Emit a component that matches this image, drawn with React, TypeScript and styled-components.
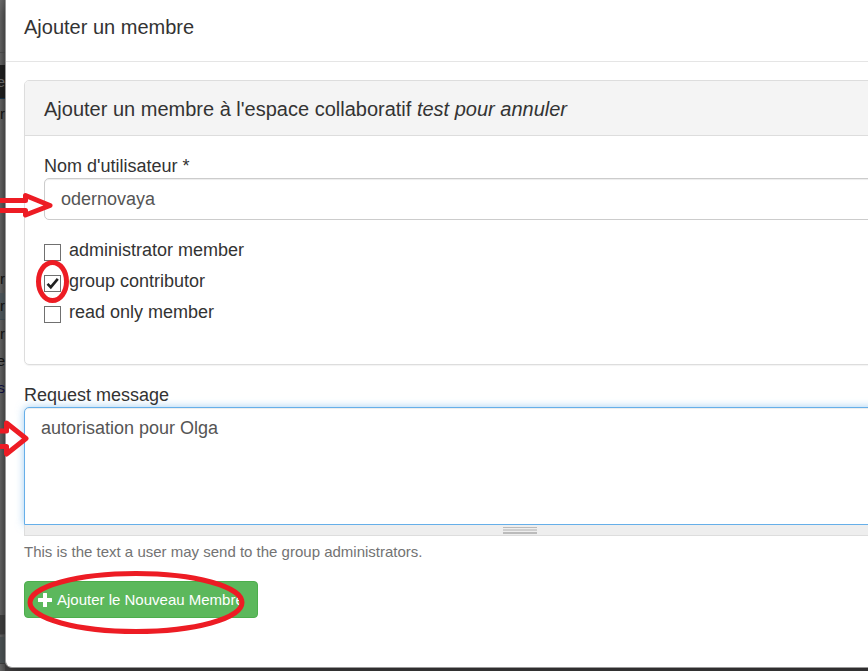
import React from "react";
import styled, { createGlobalStyle } from "styled-components";

const GlobalStyle = createGlobalStyle`
  *, *::before, *::after { box-sizing: border-box; }
  body {
    margin: 0;
    background: #4a4849;
    color: #333;
    font-family: "Liberation Sans", Arial, sans-serif;
    font-size: 18px;
    line-height: 24px;
  }
`;

const Screen = styled.div`
  position: relative;
  display: flex;
  min-height: 100vh;
  overflow: hidden;
`;

const Backdrop = styled.div`
  display: flex;
  flex-direction: column;
  flex: 0 0 5px;
  overflow: hidden;
  background: linear-gradient(to right, #6c6c6c, #5a5a5a);
`;

const BackdropRow = styled.div<{
  $height: number;
  $fill?: string;
  $edge?: string;
  $ink?: string;
}>`
  display: flex;
  justify-content: flex-end;
  align-items: center;
  flex: none;
  height: ${(p) => p.$height}px;
  background: ${(p) => p.$fill ?? "transparent"};
  border-bottom: 1px solid ${(p) => p.$edge ?? "transparent"};
  color: ${(p) => p.$ink ?? "#151515"};
  font-size: 15px;
`;

const Modal = styled.div`
  flex: none;
  align-self: flex-start;
  width: calc(100% + 162px);
  background: #fff;
  border: 1px solid #999;
  border-top: 0;
  border-radius: 0 0 7px 7px;
  box-shadow: 0 5px 15px rgba(0, 0, 0, 0.5);
`;

const ModalHeader = styled.header`
  padding: 14px 18px 20px;
  border-bottom: 1px solid #e5e5e5;
`;

const ModalTitle = styled.h1`
  margin: 0;
  font-size: 20px;
  line-height: 27px;
  font-weight: 400;
`;

const ModalBody = styled.form`
  padding: 18px 18px 49px;
`;

const Panel = styled.section`
  margin-bottom: 18px;
  border: 1px solid #ddd;
  border-radius: 5px;
  box-shadow: 0 1px 1px rgba(0, 0, 0, 0.05);
`;

const PanelHeading = styled.header`
  padding: 15px 19px 13px;
  background: #f4f4f4;
  border-bottom: 1px solid #ddd;
  border-radius: 4px 4px 0 0;
`;

const PanelTitle = styled.h2`
  margin: 0;
  font-size: 20px;
  line-height: 26px;
  font-weight: 400;
`;

const PanelBody = styled.div`
  padding: 18px 19px 40px;
`;

const FieldLabel = styled.label`
  display: block;
`;

const TextInput = styled.input`
  display: block;
  width: 100%;
  height: 42px;
  padding: 0 16px;
  border: 1px solid #ccc;
  border-radius: 5px;
  box-shadow: inset 0 1px 1px rgba(0, 0, 0, 0.075);
  color: #555;
  font: inherit;
  outline: 0;
`;

const CheckList = styled.div`
  display: grid;
  grid-auto-rows: 24px;
  row-gap: 7px;
  margin-top: 18px;
`;

const CheckLabel = styled.label`
  display: flex;
  align-items: center;
  gap: 8px;
`;

const CheckBoxFrame = styled.span`
  display: grid;
  width: 17px;
  height: 17px;
  margin-top: 4px;

  > * {
    grid-area: 1 / 1;
  }

  svg {
    visibility: hidden;
    pointer-events: none;
  }

  input:checked + svg {
    visibility: visible;
  }
`;

const CheckBox = styled.input`
  appearance: none;
  width: 17px;
  height: 17px;
  margin: 0;
  border: 1px solid #707070;
  background: #fff;
`;

const MessageArea = styled.textarea`
  display: block;
  width: 100%;
  height: 118px;
  padding: 8px 16px;
  border: 1px solid #66afe9;
  border-radius: 5px 5px 0 0;
  box-shadow: inset 0 1px 1px rgba(0, 0, 0, 0.075), 0 0 8px rgba(102, 175, 233, 0.6);
  color: #555;
  font: inherit;
  resize: none;
  outline: 0;
`;

const Grippie = styled.div`
  position: relative;
  display: flex;
  justify-content: center;
  align-items: center;
  height: 11px;
  background: #eee;
  border: 1px solid #ddd;
  border-top: 0;
`;

const HelpText = styled.p`
  margin: 4px 0 17px;
  color: #737373;
  font-size: 15px;
`;

const SubmitButton = styled.button`
  display: flex;
  align-items: center;
  gap: 5px;
  height: 37px;
  padding: 0 13px;
  border: 1px solid #4cae4c;
  border-radius: 4px;
  background: #5cb85c;
  color: #fff;
  font: inherit;
  font-size: 15px;
`;

const Annotations = styled.svg`
  position: absolute;
  top: 0;
  left: 0;
  pointer-events: none;
`;

const roles = [
  { id: "administrator", label: "administrator member", checked: false },
  { id: "contributor", label: "group contributor", checked: true },
  { id: "reader", label: "read only member", checked: false },
];

export default function App() {
  return (
    <>
      <GlobalStyle />
      <Screen>
        <Backdrop aria-hidden="true">
          <BackdropRow $height={53} $edge="#555" />
          <BackdropRow $height={12} />
          <BackdropRow $height={34} $fill="#222" $edge="#173a55" $ink="#777">e</BackdropRow>
          <BackdropRow $height={30}>r</BackdropRow>
          <BackdropRow $height={137} />
          <BackdropRow $height={27}>r</BackdropRow>
          <BackdropRow $height={27} $fill="#566066" $edge="#48555e">r</BackdropRow>
          <BackdropRow $height={28}>r</BackdropRow>
          <BackdropRow $height={27}>e</BackdropRow>
          <BackdropRow $height={27} $ink="#10104a">s</BackdropRow>
          <BackdropRow $height={213} />
          <BackdropRow $height={20} $fill="#444" $edge="#555" />
          <BackdropRow $height={2} />
          <BackdropRow $height={27} $fill="#535a5c" $edge="#444" />
        </Backdrop>

        <Modal role="dialog" aria-labelledby="dialog-title">
          <ModalHeader>
            <ModalTitle id="dialog-title">Ajouter un membre</ModalTitle>
          </ModalHeader>
          <ModalBody onSubmit={(event) => event.preventDefault()}>
            <Panel>
              <PanelHeading>
                <PanelTitle>
                  Ajouter un membre à l'espace collaboratif <em>test pour annuler</em>
                </PanelTitle>
              </PanelHeading>
              <PanelBody>
                <FieldLabel htmlFor="username">Nom d'utilisateur *</FieldLabel>
                <TextInput id="username" type="text" defaultValue="odernovaya" required />
                <CheckList>
                  {roles.map((role) => (
                    <CheckLabel key={role.id} htmlFor={role.id}>
                      <CheckBoxFrame>
                        <CheckBox id={role.id} type="checkbox" defaultChecked={role.checked} />
                        <svg width="17" height="17" viewBox="0 0 17 17">
                          <path d="M3.5 8.8 6.8 12.2 13.8 3.8" fill="none" stroke="#212121" strokeWidth="2.6" />
                        </svg>
                      </CheckBoxFrame>
                      {role.label}
                    </CheckLabel>
                  ))}
                </CheckList>
              </PanelBody>
            </Panel>

            <FieldLabel htmlFor="message">Request message</FieldLabel>
            <MessageArea id="message" defaultValue="autorisation pour Olga" />
            <Grippie>
              <svg width="34" height="7" viewBox="0 0 34 7" shapeRendering="crispEdges">
                <path d="M0 .5h34M0 5.5h34M0 6.5h34" stroke="#bbb" />
                <path d="M0 2.5h34M0 3.5h34" stroke="#cfcfcf" />
              </svg>
            </Grippie>
            <HelpText>This is the text a user may send to the group administrators.</HelpText>
            <SubmitButton type="submit">
              <svg width="14" height="14" viewBox="0 0 14 14" aria-hidden="true">
                <path
                  d="M5.5 0h3q.5 0 .5.5V5h4.5q.5 0 .5.5v3q0 .5-.5.5H9v4.5q0 .5-.5.5h-3q-.5 0-.5-.5V9H.5Q0 9 0 8.500v-3Q0 5 .5 5H5V.5Q5 0 5.500 0z"
                  fill="#fff"
                />
              </svg>
              Ajouter le Nouveau Membre
            </SubmitButton>
          </ModalBody>
        </Modal>

        <Annotations
          width="260"
          height="640"
          viewBox="0 0 260 640"
          fill="none"
          stroke="#ed1c24"
          strokeWidth="5"
          strokeLinejoin="round"
          aria-hidden="true"
        >
          <path d="M-4 200.500H25.500V195.500L50 205.500 25.500 215V210.500H-4" />
          <path d="M-4 431H6.500V423L26 438.500 6.500 454V446.500H-4" />
          <ellipse cx="52.500" cy="281.500" rx="14" ry="19" />
          <ellipse cx="136" cy="602.500" rx="106" ry="29" />
        </Annotations>
      </Screen>
    </>
  );
}
